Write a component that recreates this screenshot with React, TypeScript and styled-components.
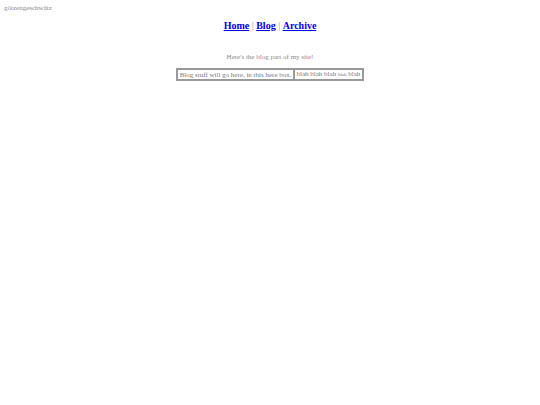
import React from "react";
import styled, { createGlobalStyle } from "styled-components";

const Global = createGlobalStyle`
  html, body { margin: 0; padding: 0; background: #fff; }
  body { padding: 4px; font-family: "Liberation Serif", "Times New Roman", serif; }
`;

const SiteName = styled.div`
  font-size: 7px;
  line-height: 8px;
  color: #8a8a8a;
`;

const Nav = styled.h2`
  margin: 8px 0 0;
  text-align: center;
  font-size: 10px;
  line-height: 12px;
  font-weight: bold;
  color: #999;
`;

const NavLink = styled.a`
  color: #0000ee;
  text-decoration: underline;
`;

const Sep = styled.span`
  font-weight: normal;
`;

const Intro = styled.p`
  margin: 21px 0 0;
  text-align: center;
  font-size: 7px;
  line-height: 8px;
  color: #8a8a8a;
`;

const Table = styled.table`
  margin: 7px auto 0;
  border: 1px solid #999;
  border-spacing: 0;
  font-size: 7px;
  color: #7a7a7a;
`;

const Cell = styled.td`
  border: 1px solid #999;
  padding: 0 1.5px;
  line-height: 8px;
`;

const Small = styled.span`
  font-size: 5px;
`;

export default function App() {
  return (
    <>
      <Global />
      <SiteName>götzengeschwätz</SiteName>
      <Nav>
        <NavLink href="#">Home</NavLink>
        <Sep> | </Sep>
        <NavLink href="#">Blog</NavLink>
        <Sep> | </Sep>
        <NavLink href="#">Archive</NavLink>
      </Nav>
      <Intro>Here's the blog part of my site!</Intro>
      <Table>
        <tbody>
          <tr>
            <Cell>Blog stuff will go here, in this here box.</Cell>
            <Cell>
              blah blah blah <Small>blah</Small> blah
            </Cell>
          </tr>
        </tbody>
      </Table>
    </>
  );
}
